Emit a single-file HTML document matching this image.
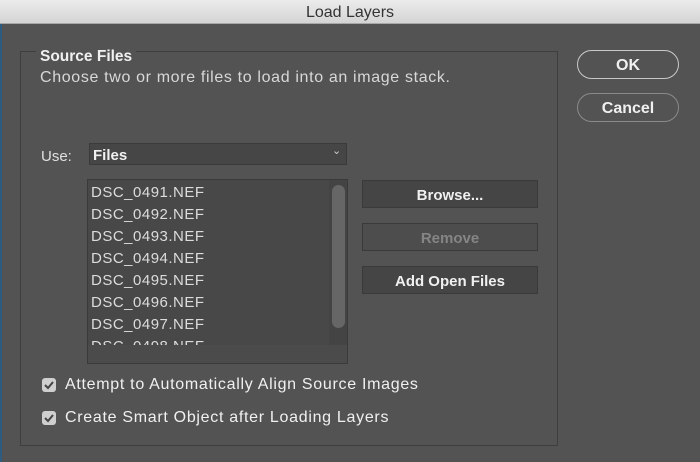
<!DOCTYPE html>
<html><head><style>
*{margin:0;padding:0;box-sizing:border-box}
body{width:700px;height:462px;background:#535353;font-family:"Liberation Sans",sans-serif;color:#e0e0e0;position:relative;overflow:hidden}
.a{position:absolute}
.title{left:0;top:0;width:700px;height:24px;background:linear-gradient(#ececec,#d4d4d4);border-bottom:1px solid #a8a8a8;color:#333;font-size:16px;text-align:center;line-height:25px}
.blue{left:0;top:24px;width:2px;height:438px;background:#2d5c80}
.grp{left:20px;top:51px;width:538px;height:395px;border:1px solid #3e3e3e}
.t{font-size:15px;white-space:nowrap}
.btn{background:#454545;border:1px solid #3a3a3a;font-weight:bold;font-size:15px;text-align:center;color:#f0f0f0}
.pill{border:1.5px solid #c8c8c8;border-radius:15px;font-weight:bold;font-size:16px;text-align:center;color:#f0f0f0;height:29px;line-height:29px;width:102px;left:577px}
.cb{width:14px;height:14px;background:#cfcfcf;border-radius:3px}
</style></head><body>
<div class="a title">Load Layers</div>
<div class="a blue"></div>
<div class="a grp"></div>
<div class="a t" style="left:36px;top:48px;background:#535353;padding:0 4px;font-weight:bold;color:#f0f0f0;font-size:15.5px">Source Files</div>
<div class="a t" style="left:40px;top:69px;font-size:16px;letter-spacing:0.65px;color:#d8d8d8">Choose two or more files to load into an image stack.</div>
<div class="a t" style="left:41px;top:148px">Use:</div>
<div class="a" style="left:89px;top:143px;width:258px;height:22px;background:#464646;border:1px solid #3a3a3a"></div>
<div class="a t" style="left:93px;top:147px;font-weight:bold;color:#f0f0f0">Files</div>
<div class="a t" style="left:332px;top:144px;font-size:11px;color:#ccc">&#8964;</div>
<div class="a" style="left:87px;top:179px;width:261px;height:185px;background:#4b4b4b;border:1px solid #3a3a3a"></div>
<div class="a" style="left:88px;top:180px;width:241px;height:165px;background:#484848;overflow:hidden">
<div class="t" style="line-height:22px;padding:2px 0 0 3px;color:#dcdcdc;letter-spacing:0.5px">DSC_0491.NEF<br>DSC_0492.NEF<br>DSC_0493.NEF<br>DSC_0494.NEF<br>DSC_0495.NEF<br>DSC_0496.NEF<br>DSC_0497.NEF<br>DSC_0498.NEF</div></div>
<div class="a" style="left:329px;top:180px;width:18px;height:165px;background:#444"></div>
<div class="a" style="left:332px;top:185px;width:13px;height:143px;background:#666;border-radius:7px"></div>
<div class="a btn" style="left:362px;top:180px;width:176px;height:28px;line-height:30px">Browse...</div>
<div class="a btn" style="left:362px;top:223px;width:176px;height:28px;line-height:30px;background:#4d4d4d;color:#858585">Remove</div>
<div class="a btn" style="left:362px;top:266px;width:176px;height:28px;line-height:30px">Add Open Files</div>
<div class="a pill" style="top:50px">OK</div>
<div class="a pill" style="top:93px;border-color:#8a8a8a">Cancel</div>
<div class="a cb" style="left:42px;top:378px"></div>
<div class="a cb" style="left:42px;top:411px"></div>
<svg class="a" style="left:42px;top:378px" width="14" height="47"><path d="M3 7l3 3 5-6M3 40l3 3 5-6" stroke="#444" stroke-width="2" fill="none"/></svg>
<div class="a t" style="left:65px;top:376px;color:#f0f0f0;font-size:16px;letter-spacing:0.7px">Attempt to Automatically Align Source Images</div>
<div class="a t" style="left:65px;top:409px;color:#f0f0f0;font-size:16px;letter-spacing:0.7px">Create Smart Object after Loading Layers</div>
</body></html>
